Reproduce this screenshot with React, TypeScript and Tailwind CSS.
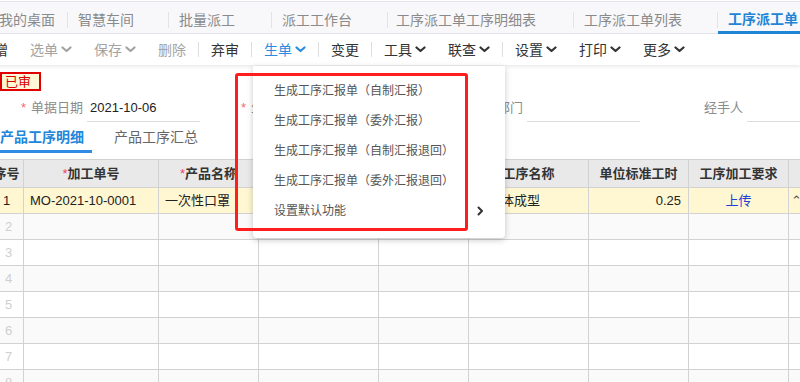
import React from 'react';

const tabs = [
	{ label: '我的桌面', w: 'w-[68px] pl-0' },
	{ label: '智慧车间', w: 'w-[100px] pl-[10px]' },
	{ label: '批量派工', w: 'w-[102px] pl-[10px]' },
	{ label: '派工工作台', w: 'w-[115px] pl-[10px]' },
	{ label: '工序派工单工序明细表', w: 'w-[185px] pl-[8px]' },
	{ label: '工序派工单列表', w: 'w-[143px] pl-[10px]' },
];

type Tool = { label: string; tone: 'off' | 'on' | 'active'; caret?: boolean; sep?: boolean };

const tools: Tool[] = [
	{ label: '增', tone: 'on' },
	{ label: '选单', tone: 'off', caret: true },
	{ label: '保存', tone: 'off', caret: true },
	{ label: '删除', tone: 'off', sep: true },
	{ label: '弃审', tone: 'on', sep: true },
	{ label: '生单', tone: 'active', caret: true, sep: true },
	{ label: '变更', tone: 'on', sep: true },
	{ label: '工具', tone: 'on', caret: true },
	{ label: '联查', tone: 'on', caret: true, sep: true },
	{ label: '设置', tone: 'on', caret: true },
	{ label: '打印', tone: 'on', caret: true },
	{ label: '更多', tone: 'on', caret: true },
];

const toneClass = {
	off: 'text-[#a3a3a3]',
	on: 'text-[#333]',
	active: 'text-[#2b8be0]',
};

const menuItems = [
	'生成工序汇报单（自制汇报）',
	'生成工序汇报单（委外汇报）',
	'生成工序汇报单（自制汇报退回）',
	'生成工序汇报单（委外汇报退回）',
];

const cols = [
	{ w: 'w-[34px]', head: '序号' },
	{ w: 'w-[135px]', head: '加工单号', req: true },
	{ w: 'w-[100px]', head: '产品名称', req: true },
	{ w: 'w-[120px]', head: '工序编码' },
	{ w: 'w-[90px]', head: '工序序号' },
	{ w: 'w-[120px]', head: '工序名称' },
	{ w: 'w-[100px]', head: '单位标准工时' },
	{ w: 'w-[100px]', head: '工序加工要求' },
	{ w: 'w-[100px]', head: '检验' },
];

function Caret({ className }: { className?: string }) {
	return (
		<svg width="11" height="7" viewBox="0 0 11 7" className={className}>
			<path d="M1.5 1.5l4 3.5 4-3.5" fill="none" stroke="currentColor" strokeWidth="2.2" strokeLinecap="round" strokeLinejoin="round" />
		</svg>
	);
}

function Field({ label, value, req }: { label: string; value?: string; req?: boolean }) {
	return (
		<div className="flex w-[220px] items-center shrink-0">
			<div className="flex w-[107px] justify-end pr-[4px] text-[13px] text-[#8c8c8c]">
				{req && <span className="mr-[5px] text-[#f56c6c]">*</span>}
				<span>{label}</span>
			</div>
			<div className="flex h-[28px] w-[113px] items-center border-b border-[#dcdcdc] pl-[3px] text-[13px] text-[#222]">
				{value}
			</div>
		</div>
	);
}

export default function App() {
	const rows = [1, 2, 3, 4, 5, 6, 7, 8];

	return (
		<div className="relative h-[382px] w-[800px] overflow-hidden bg-white font-[Liberation_Sans,Noto_Sans_CJK_SC,sans-serif]">
			{/* page tabs */}
			<div className="mt-[1px] flex h-[33px] border-t border-b border-[#e2e5ec] bg-[#f8f8fa] text-[14px] text-[#8a8a8a]">
				{tabs.map((t, i) => (
					<div key={t.label} className="flex items-center">
						<div className={`flex h-full items-center pt-[4px] leading-none ${t.w} ${i === 0 ? '-ml-[1px]' : ''}`}>{t.label}</div>
						<span className="mt-[4px] h-[16px] w-px bg-[#e3e3e3]" />
					</div>
				))}
				<div className="relative flex items-center pl-[10px] pt-[4px] font-bold text-[#1f86d6]">
					工序派工单
					<span className="absolute -bottom-[1px] left-0 h-[3px] w-[100px] bg-[#1f86d6]" />
				</div>
			</div>

			{/* toolbar */}
			<div className="relative flex h-[31px] items-center -ml-[17px] bg-white text-[14px] shadow-[0_2px_3px_rgba(0,0,0,0.08)]">
				{tools.map((t) => (
					<React.Fragment key={t.label}>
						<div className={`flex items-center gap-[3px] px-[11px] leading-none ${toneClass[t.tone]}`}>
							<span>{t.label}</span>
							{t.caret && <Caret />}
						</div>
						{t.sep && <span className="mx-[1px] h-[15px] w-px bg-[#dedede]" />}
					</React.Fragment>
				))}
			</div>

			{/* status badge */}
			<div className="mt-[7px] flex h-[19px] w-[41px] items-center border-2 border-[#e00000] bg-[#fff8d6] pl-[3px] text-[13px] leading-none text-[#d40000]">
				已审
			</div>

			{/* form row */}
			<div className="-ml-[20px] mt-[3px] flex">
				<Field label="单据日期" value="2021-10-06" req />
				<Field label="生产车间" req />
				<Field label="部门" />
				<Field label="经手人" />
			</div>

			{/* detail tabs */}
			<div className="flex h-[31px] items-center text-[14px]">
				<div className="relative flex h-full w-[92px] items-center font-bold text-[#2187dc]">
					产品工序明细
					<span className="absolute bottom-0 left-0 h-[3px] w-full bg-[#2f8be5]" />
				</div>
				<div className="ml-[22px] text-[#666]">产品工序汇总</div>
			</div>

			{/* grid */}
			<div className="-ml-[10px] mt-[6px] text-[13px]">
				<div className="flex h-[29px] bg-[#e9e9e9] font-bold text-[#333]">
					{cols.map((c) => (
						<div key={c.head} className={`flex shrink-0 items-center justify-center border-r border-b border-t border-[#d2d2d2] ${c.w}`}>
							{c.req && <span className="font-normal text-[#f2416b]">*</span>}
							{c.head}
						</div>
					))}
				</div>
				{rows.map((r) => (
					<div
						key={r}
						className={`flex h-[26px] ${r === 1 ? 'bg-[#fef7d2]' : r % 2 === 0 ? 'bg-[#fafafa]' : 'bg-white'}`}
					>
						{cols.map((c, ci) => (
							<div key={c.head} className={`flex shrink-0 items-center border-r border-b border-[#d2d2d2] ${c.w}`}>
								{r === 1 ? (
									<>
										{ci === 0 && <span className="w-full text-center text-[#222]">1</span>}
										{ci === 1 && <span className="pl-[6px] text-[#222]">MO-2021-10-0001</span>}
										{ci === 2 && <span className="pl-[6px] text-[#222]">一次性口罩</span>}
										{ci === 5 && <span className="pl-[6px] text-[#222]">口罩体成型</span>}
										{ci === 6 && <span className="w-full pr-[7px] text-right text-[#222]">0.25</span>}
										{ci === 7 && <span className="w-full text-center text-[#1f3fd6]">上传</span>}
										{ci === 8 && <span className="pl-[2px] text-[#555]">⌃</span>}
									</>
								) : (
									ci === 0 && <span className="w-full pl-[4px] text-center text-[#cfcfcf]">{r}</span>
								)}
							</div>
						))}
					</div>
				))}
			</div>

			{/* dropdown of 生单 */}
			<div className="absolute left-[253px] top-[66px] h-[172px] w-[252px] rounded-b-[4px] bg-white pt-[10px] text-[12px] text-[#555] shadow-[0_2px_6px_rgba(0,0,0,0.22)]">
				{menuItems.map((m) => (
					<div key={m} className="flex h-[30px] items-center pl-[21px]">
						{m}
					</div>
				))}
				<div className="flex h-[30px] items-center justify-between pl-[21px] pr-[21px]">
					<span>设置默认功能</span>
					<svg width="7" height="10" viewBox="0 0 7 10">
						<path d="M1.5 1.5l3.5 3.5-3.5 3.5" fill="none" stroke="#333" strokeWidth="2" strokeLinecap="round" strokeLinejoin="round" />
					</svg>
				</div>
			</div>

			{/* annotation */}
			<div className="absolute left-[235px] top-[73px] h-[158px] w-[233px] rounded-[3px] border-[3px] border-[#ff1d1d]" />
		</div>
	);
}
